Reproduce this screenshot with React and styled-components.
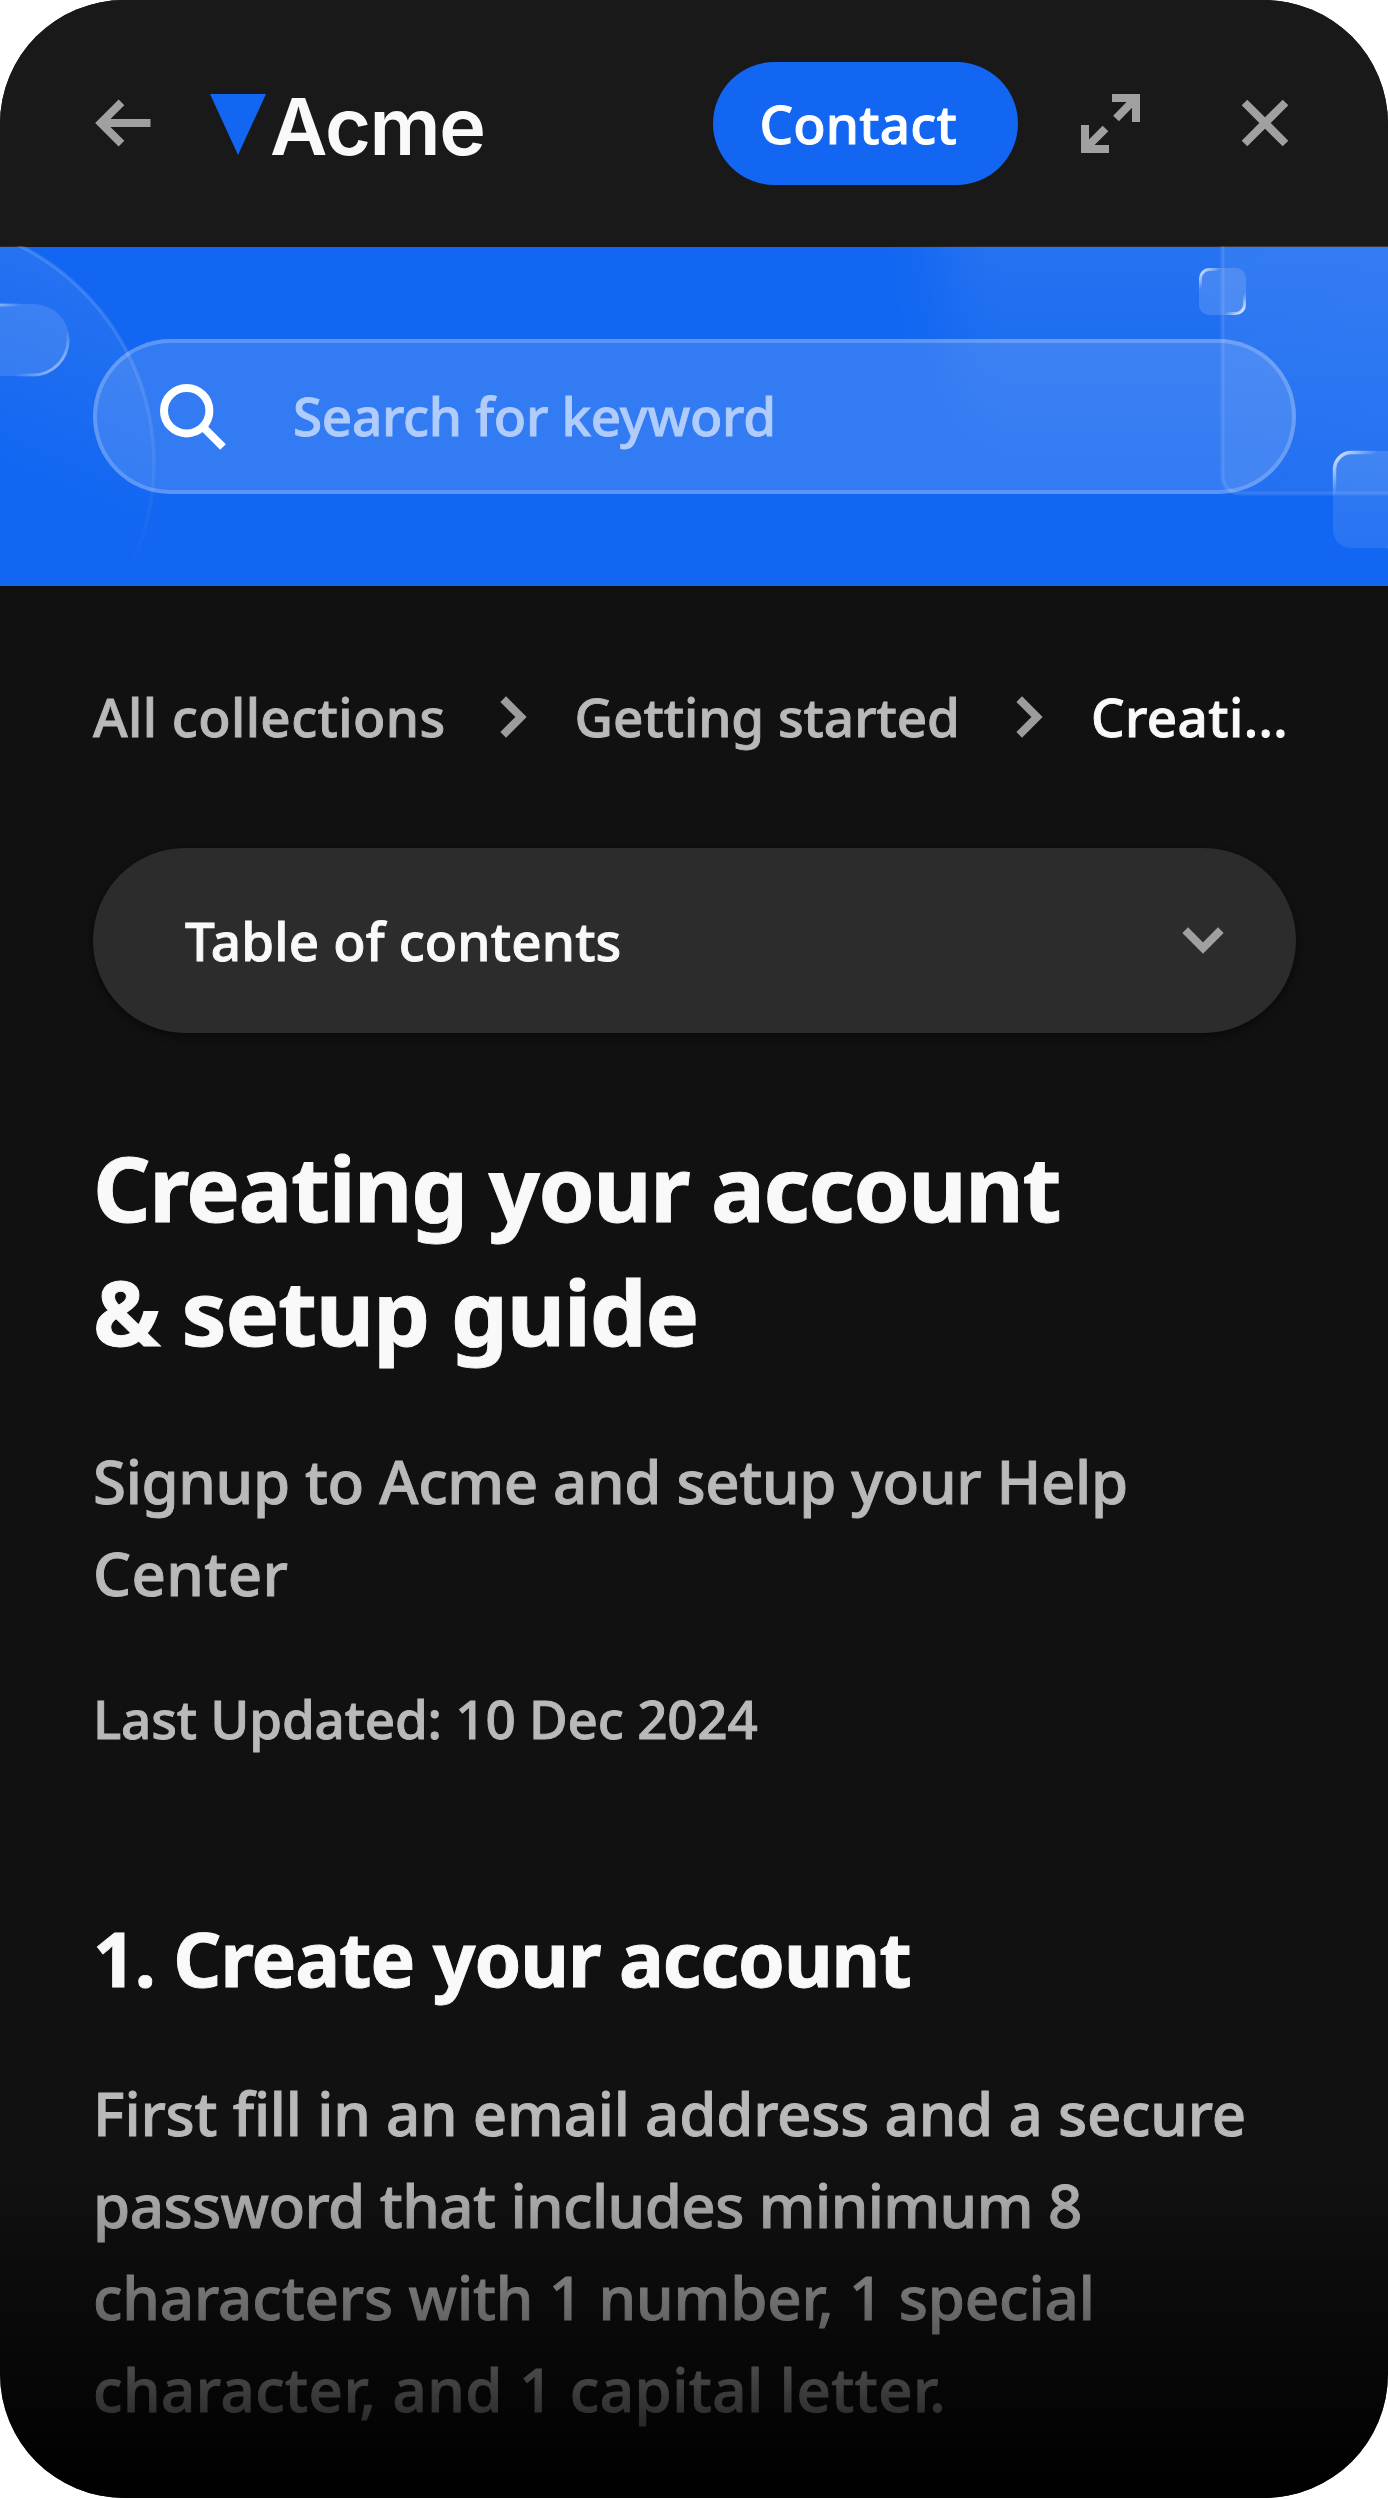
import React from 'react';
import styled, { createGlobalStyle } from 'styled-components';

export default function App() {
  return (
    <>
      <GlobalStyle />
      <Widget>
        <Header>
          <IconButton aria-label="Back">
            <BackIcon />
          </IconButton>
          <Logo>
            <LogoMark />
            <LogoText>Acme</LogoText>
          </Logo>
          <ContactButton>Contact</ContactButton>
          <IconButton aria-label="Expand">
            <ExpandIcon />
          </IconButton>
          <IconButton aria-label="Close" $gap="101px">
            <CloseIcon />
          </IconButton>
        </Header>

        <Hero>
          <HeroShapes />
          <SearchBar>
            <SearchIcon />
            <SearchText>Search for keyword</SearchText>
          </SearchBar>
        </Hero>

        <Content>
          <Breadcrumbs>
            <Crumb $spacing="0.4px">All collections</Crumb>
            <ChevronRight />
            <Crumb $spacing="-0.05px">Getting started</Crumb>
            <ChevronRight />
            <Crumb $active $spacing="0.4px">
              Creati...
            </Crumb>
          </Breadcrumbs>

          <TableOfContents>
            Table of contents
            <ChevronDown />
          </TableOfContents>

          <Title>
            <Line $spacing="-1.45px">Creating your account</Line>
            <Line $spacing="-1.2px">& setup guide</Line>
          </Title>
          <Lead>
            <Line $spacing="-0.35px">Signup to Acme and setup your Help</Line>
            <Line $spacing="0.4px">Center</Line>
          </Lead>
          <Updated>Last Updated: 10 Dec 2024</Updated>

          <SectionTitle>1. Create your account</SectionTitle>
          <Paragraph>
            <Line $spacing="-0.22px">
              First fill in an email address and a secure
            </Line>
            <Line $spacing="-0.57px">password that includes minimum 8</Line>
            <Line $spacing="-0.12px">characters with 1 number, 1 special</Line>
            <Line $spacing="0.45px">character, and 1 capital letter.</Line>
          </Paragraph>
        </Content>
        <Fade />
      </Widget>
    </>
  );
}

function BackIcon() {
  return (
    <svg width="58" height="48" viewBox="0 0 58 48" fill="none">
      <path d="M27.5 3.3 6.8 24l20.7 20.7M6 24h50.5" stroke="#a0a0a0" strokeWidth="8" />
    </svg>
  );
}

function LogoMark() {
  return (
    <Mark width="56" height="61" viewBox="0 0 56 61">
      <path d="M0 0h56L28 61z" fill="#1266f1" />
    </Mark>
  );
}

function ExpandIcon() {
  return (
    <svg width="59" height="59" viewBox="0 0 59 59" fill="none">
      <path
        d="M31 4h24v24M55 4 35 24.5M4 31v24h24M4 55l20.5-20.5"
        stroke="#a0a0a0"
        strokeWidth="8"
      />
    </svg>
  );
}

function CloseIcon() {
  return (
    <svg width="48" height="48" viewBox="0 0 48 48" fill="none">
      <path d="m3.5 3.5 41 41m0-41-41 41" stroke="#a0a0a0" strokeWidth="8" />
    </svg>
  );
}

function SearchIcon() {
  return (
    <svg width="66" height="66" viewBox="0 0 66 66" fill="none">
      <circle cx="26.7" cy="26.7" r="22.7" stroke="#fff" strokeWidth="8" />
      <path d="m42.5 42.5 20.5 20.5" stroke="#fff" strokeWidth="8" />
    </svg>
  );
}

function ChevronRight() {
  return (
    <Separator width="27" height="42" viewBox="0 0 27 42" fill="none">
      <path d="M3.2 3.2 21 21 3.2 38.8" stroke="#9c9c9c" strokeWidth="8" />
    </Separator>
  );
}

function ChevronDown() {
  return (
    <svg width="42" height="27" viewBox="0 0 42 27" fill="none">
      <path d="M3.2 3.2 21 21 38.8 3.2" stroke="#a0a0a0" strokeWidth="8" />
    </svg>
  );
}

function HeroShapes() {
  return (
    <Shapes viewBox="0 0 1388 340" fill="none">
      <defs>
        <filter id="soft" x="-30%" y="-60%" width="160%" height="220%">
          <feGaussianBlur stdDeviation="28" />
        </filter>
        <linearGradient id="glow" x1="0" y1="0" x2="0" y2="1">
          <stop offset="0.28" stopColor="#fff" stopOpacity="0.085" />
          <stop offset="0.6" stopColor="#fff" stopOpacity="0.05" />
          <stop offset="1" stopColor="#fff" stopOpacity="0" />
        </linearGradient>
        <linearGradient id="disc" gradientUnits="userSpaceOnUse" x1="60" y1="0" x2="-30" y2="210">
          <stop stopColor="#fff" stopOpacity="0.09" />
          <stop offset="1" stopColor="#fff" stopOpacity="0" />
        </linearGradient>
        <linearGradient id="discEdge" gradientUnits="userSpaceOnUse" x1="0" y1="0" x2="0" y2="330">
          <stop stopColor="#fff" stopOpacity="0.15" />
          <stop offset="0.5" stopColor="#fff" stopOpacity="0.1" />
          <stop offset="1" stopColor="#fff" stopOpacity="0" />
        </linearGradient>
        <linearGradient id="panel" x1="0" y1="0" x2="1" y2="1">
          <stop stopColor="#fff" stopOpacity="0.06" />
          <stop offset="1" stopColor="#fff" stopOpacity="0.08" />
        </linearGradient>
        <linearGradient id="pillEdge" gradientUnits="userSpaceOnUse" x1="0" y1="58" x2="60" y2="130">
          <stop stopColor="#fff" stopOpacity="0.4" />
          <stop offset="0.15" stopColor="#fff" stopOpacity="0" />
          <stop offset="0.68" stopColor="#fff" stopOpacity="0" />
          <stop offset="1" stopColor="#fff" stopOpacity="0.6" />
        </linearGradient>
        <linearGradient id="tileEdge" x1="0" y1="0" x2="1" y2="1">
          <stop stopColor="#fff" stopOpacity="0.85" />
          <stop offset="0.23" stopColor="#fff" stopOpacity="0" />
          <stop offset="0.77" stopColor="#fff" stopOpacity="0" />
          <stop offset="1" stopColor="#fff" stopOpacity="0.95" />
        </linearGradient>
        <linearGradient id="tile" x1="0" y1="0" x2="0" y2="1">
          <stop stopColor="#fff" stopOpacity="0.13" />
          <stop offset="1" stopColor="#fff" stopOpacity="0.09" />
        </linearGradient>
      </defs>
      <path d="M930-90h540v320H970z" fill="url(#glow)" filter="url(#soft)" />
      <circle cx="-89" cy="217" r="243" fill="url(#disc)" stroke="url(#discEdge)" strokeWidth="3.5" />
      <rect x="-80" y="58" width="149.5" height="72" rx="36" fill="#fff" fillOpacity="0.12" />
      <rect x="-80" y="59" width="148" height="70" rx="35" stroke="url(#pillEdge)" strokeWidth="3" />
      <rect x="1222.5" y="-40" width="300" height="287.5" rx="17" fill="url(#panel)" stroke="#fff" strokeOpacity="0.1" strokeWidth="4" />
      <rect x="1199" y="22" width="47" height="47" rx="10" fill="#fff" fillOpacity="0.14" />
      <rect x="1200.5" y="23.5" width="44" height="44" rx="9" stroke="url(#tileEdge)" strokeWidth="3" />
      <rect x="1333" y="205" width="97" height="97" rx="18" fill="url(#tile)" />
      <rect x="1334.5" y="206.5" width="94" height="94" rx="17" stroke="url(#tileEdge)" strokeWidth="3.5" />
    </Shapes>
  );
}

const GlobalStyle = createGlobalStyle`
  * {
    box-sizing: border-box;
  }

  body {
    margin: 0;
    background: #fff;
    font-family: 'Noto Sans', sans-serif;
    font-weight: 500;
    -webkit-text-stroke: 0.9px;
  }

  svg {
    display: block;
    flex-shrink: 0;
  }
`;

const Widget = styled.div`
  position: relative;
  width: 1387.7px;
  height: 2498.4px;
  border-radius: 124px;
  overflow: hidden;
  background: #111;
`;

const Header = styled.header`
  display: flex;
  align-items: center;
  height: 247px;
  padding: 0 99px 1px 94px;
  background: #191919;
`;

const IconButton = styled.button`
  padding: 0;
  margin-left: ${(p) => p.$gap || 0};
  border: 0;
  background: none;
`;

const Logo = styled.div`
  display: flex;
  align-items: center;
  margin-left: 58px;
`;

const Mark = styled.svg`
  margin-top: 2px;
`;

const LogoText = styled.span`
  padding-top: 6px;
  margin-left: 4px;
  font-family: Inter, sans-serif;
  font-size: 79px;
  font-weight: 600;
  line-height: 96px;
  letter-spacing: -1.4px;
  color: #f9f9f9;
  -webkit-text-stroke: 0;
`;

const ContactButton = styled.button`
  width: 305px;
  height: 123px;
  margin: 0 63px 0 auto;
  padding: 0 14px 0 0;
  border: 0;
  border-radius: 62px;
  background: #1266f1;
  font: inherit;
  font-size: 53px;
  letter-spacing: 0.2px;
  color: #fff;
`;

const Hero = styled.section`
  position: relative;
  height: 339px;
  padding: 92px 92px 0 93px;
  background: #1266f1;
`;

const Shapes = styled.svg`
  position: absolute;
  bottom: 0;
  left: 0;
  width: 1388px;
  height: 340px;
`;

const SearchBar = styled.div`
  position: relative;
  display: flex;
  align-items: center;
  height: 155px;
  padding-left: 63px;
  border: 4px solid rgba(255, 255, 255, 0.2);
  border-radius: 78px;
  background: rgba(255, 255, 255, 0.14);
`;

const SearchText = styled.span`
  margin: 0 0 2px 67px;
  font-size: 53px;
  letter-spacing: -0.3px;
  color: #b0ccfb;
`;

const Content = styled.main`
  padding: 90px 92px 0 93px;
`;

const Breadcrumbs = styled.nav`
  display: flex;
  align-items: center;
  height: 80px;
`;

const Separator = styled.svg`
  margin: 1px 48px 0 54px;

  &:last-of-type {
    margin: 1px 48px 0 56px;
  }
`;

const Crumb = styled.span`
  font-size: 53px;
  letter-spacing: ${(p) => p.$spacing || 0};
  color: ${(p) => (p.$active ? '#f9f9f9' : '#b9b9b9')};
`;

const TableOfContents = styled.div`
  display: flex;
  align-items: center;
  justify-content: space-between;
  height: 185px;
  margin-top: 92px;
  padding: 0 72px 0 92px;
  border-radius: 93px;
  background: #2c2c2c;
  box-shadow: 0 3px 9px rgba(0, 0, 0, 0.5);
  font-size: 53px;
  letter-spacing: 0.15px;
  color: #f9f9f9;
`;

const Line = styled.span`
  display: block;
  white-space: nowrap;
  letter-spacing: ${(p) => p.$spacing || 0};
`;

const Title = styled.h1`
  margin: 92px 0 0;
  font-size: 90px;
  font-weight: 700;
  line-height: 124px;
  color: #f9f9f9;
`;

const Lead = styled.p`
  margin: 62px 0 0;
  font-size: 60px;
  line-height: 92px;
  color: #b9b9b9;
`;

const Updated = styled.p`
  margin: 60px 0 0;
  font-size: 53px;
  line-height: 80px;
  letter-spacing: -0.22px;
  color: #b9b9b9;
`;

const SectionTitle = styled.h2`
  margin: 149px 0 0;
  font-size: 75px;
  font-weight: 700;
  line-height: 100px;
  letter-spacing: -1.05px;
  color: #f9f9f9;
`;

const Paragraph = styled.p`
  margin: 59px 0 0;
  font-size: 60px;
  line-height: 92px;
  color: #b9b9b9;
`;

const Fade = styled.div`
  position: absolute;
  right: 0;
  bottom: 0;
  left: 0;
  height: 330px;
  background: linear-gradient(rgba(0, 0, 0, 0), #000);
`;
